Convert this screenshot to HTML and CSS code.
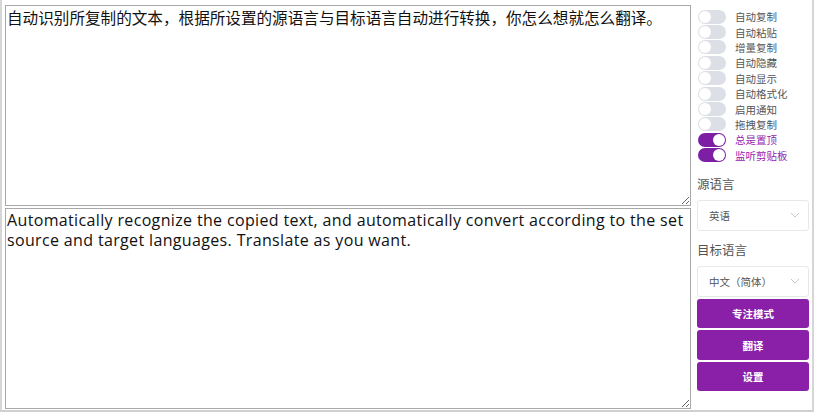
FILE: index.html
```html
<!DOCTYPE html>
<html lang="zh-CN">
<head>
    <meta charset="UTF-8">
    <title>翻译</title>
    <link rel="stylesheet" href="styles.css">
</head>
<body>
    <div class="window">
        <!-- Textos -->
        <div class="texts">
            <textarea class="box">自动识别所复制的文本，根据所设置的源语言与目标语言自动进行转换，你怎么想就怎么翻译。</textarea>
            <textarea class="box en">Automatically recognize the copied text, and automatically convert according to the set source and target languages. Translate as you want.</textarea>
        </div>

        <!-- Painel lateral -->
        <div class="side">
            <div class="switches">
                <label class="sw"><span class="track"></span>自动复制</label>
                <label class="sw"><span class="track"></span>自动粘贴</label>
                <label class="sw"><span class="track"></span>增量复制</label>
                <label class="sw"><span class="track"></span>自动隐藏</label>
                <label class="sw"><span class="track"></span>自动显示</label>
                <label class="sw"><span class="track"></span>自动格式化</label>
                <label class="sw"><span class="track"></span>启用通知</label>
                <label class="sw"><span class="track"></span>拖拽复制</label>
                <label class="sw on"><span class="track"></span>总是置顶</label>
                <label class="sw on"><span class="track"></span>监听剪贴板</label>
            </div>

            <div class="lbl first">源语言</div>
            <div class="select">英语
                <svg width="10" height="6" viewBox="0 0 10 6"><path d="M1 1 L5 5 L9 1" fill="none" stroke="#c8c8c8" stroke-width="1"/></svg>
            </div>

            <div class="lbl">目标语言</div>
            <div class="select">中文（简体）
                <svg width="10" height="6" viewBox="0 0 10 6"><path d="M1 1 L5 5 L9 1" fill="none" stroke="#c8c8c8" stroke-width="1"/></svg>
            </div>

            <div class="buttons">
                <button>专注模式</button>
                <button>翻译</button>
                <button>设置</button>
            </div>
        </div>
    </div>
</body>
</html>
```

FILE: styles.css
```css
/* Estilos gerais */
body {
    margin: 0;
    background: #fff;
    font-family: "Noto Sans CJK SC", "Noto Sans", sans-serif;
}
.window {
    width: 814px;
    height: 412px;
    border-left: 2px solid #d6d6d6;
    border-right: 2px solid #d6d6d6;
    border-bottom: 2px solid #d0d0d0;
    box-sizing: border-box;
    display: flex;
    padding: 5px 0 0 3px;
    gap: 6px;
}

/* Areas de texto */
.texts {
    display: flex;
    flex-direction: column;
    gap: 2px;
    width: 686px;
}
.box {
    height: 201px;
    margin: 0;
    padding: 1px 1px;
    border: 1px solid #a9a9a9;
    font-family: "Noto Sans CJK SC", sans-serif;
    font-size: 15.6px;
    line-height: 20px;
    color: #111;
    resize: both;
    box-sizing: border-box;
    outline: none;
}
.box.en {
    font-family: "Open Sans", "Noto Sans", sans-serif;
    font-size: 16px;
    letter-spacing: 0.35px;
    line-height: 20px;
    padding-top: 1px;
}

/* Painel lateral */
.side {
    width: 112px;
    display: flex;
    flex-direction: column;
}
.switches {
    padding-top: 4px;
}
.sw {
    display: flex;
    align-items: center;
    height: 15.4px;
    font-size: 10.5px;
    color: #555;
}
.track {
    width: 28px;
    height: 14px;
    border-radius: 7px;
    background: #dcdfe6;
    margin-right: 9px;
    position: relative;
    margin-left: 1px;
}
.track::after {
    content: "";
    position: absolute;
    left: 1px;
    top: 1px;
    width: 12px;
    height: 12px;
    border-radius: 50%;
    background: #fff;
}
.sw.on {
    color: #9324b0;
}
.sw.on .track {
    background: #7d1fa5;
}
.sw.on .track::after {
    left: 15px;
}

.lbl {
    font-size: 12.5px;
    color: #555;
    margin: 9px 0 7px 0;
}
.lbl.first {
    margin-top: 11px;
}
.select {
    height: 31px;
    border: 1px solid #e8e8e8;
    border-radius: 3px;
    box-sizing: border-box;
    display: flex;
    align-items: center;
    justify-content: space-between;
    padding: 0 8px 0 11px;
    font-size: 10.5px;
    color: #555;
}

.buttons {
    display: flex;
    flex-direction: column;
    gap: 2px;
    margin-top: 2px;
}
.buttons button {
    height: 29.5px;
    background: #8a1fa8;
    color: #fff;
    border: none;
    border-radius: 3px;
    font-family: "Noto Sans CJK SC", sans-serif;
    font-size: 10.5px;
    font-weight: bold;
    cursor: pointer;
}
```
